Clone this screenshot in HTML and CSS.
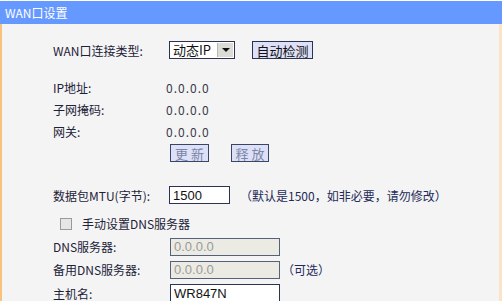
FILE: index.html
```html
<!DOCTYPE html>
<html lang="zh-CN">
<head>
  <meta charset="UTF-8" />
  <title>WAN口设置</title>
  <link rel="stylesheet" href="styles.css">
</head>
<body>
  <div class="title">WAN口设置</div>
  <div class="panel">
    <div class="row r-type">
      <span class="label">WAN口连接类型:</span>
      <div class="field">
        <div class="select"><span class="sel-text">动态IP</span><span class="sel-arrow"></span></div>
        <button class="btn btn-detect">自动检测</button>
      </div>
    </div>

    <div class="row r-info first">
      <span class="label">IP地址:</span>
      <span class="value">0.0.0.0</span>
    </div>
    <div class="row r-info">
      <span class="label">子网掩码:</span>
      <span class="value">0.0.0.0</span>
    </div>
    <div class="row r-info">
      <span class="label">网关:</span>
      <span class="value">0.0.0.0</span>
    </div>
    <div class="row r-info">
      <span class="label"></span>
      <div class="field">
        <button class="btn btn-off">更 新</button>
        <button class="btn btn-off">释 放</button>
      </div>
    </div>

    <div class="row r-mtu">
      <span class="label">数据包MTU(字节):</span>
      <div class="field">
        <input class="txt txt-mtu" value="1500">
        <span class="hint">（默认是1500，如非必要，请勿修改）</span>
      </div>
    </div>

    <div class="row r-check">
      <label class="check"><span class="box"></span>手动设置DNS服务器</label>
    </div>
    <div class="row r-dns">
      <span class="label">DNS服务器:</span>
      <input class="txt txt-dns" value="0.0.0.0" disabled>
    </div>
    <div class="row r-dns">
      <span class="label">备用DNS服务器:</span>
      <div class="field">
        <input class="txt txt-dns" value="0.0.0.0" disabled>
        <span class="hint hint-opt">（可选）</span>
      </div>
    </div>
    <div class="row r-host">
      <span class="label">主机名:</span>
      <input class="txt txt-dns" value="WR847N">
    </div>
  </div>
</body>
</html>
```

FILE: styles.css
```css
html, body {
  margin: 0;
  padding: 0;
  background: #ffffff;
  font-family: "Noto Sans CJK SC", sans-serif;
  font-size: 12px;
  color: #1c2238;
  overflow: hidden;
}

.title {
  margin-top: 1px;
  height: 23px;
  line-height: 23px;
  padding-left: 5px;
  background: #6699ff;
  color: #ffffff;
}

.panel {
  height: 277px;
  border-left: 2px solid #f6c27c;
  border-right: 3px solid #fbe3c8;
  background: #f4f4f4;
  padding: 15px 0 0 51px;
}

/* rows */
.row {
  display: flex;
  align-items: center;
  height: 22px;
}
.r-info.first { margin-top: 15px; }
.r-mtu { margin-top: 20px; }
.r-check { margin-top: 6px; height: 23px; }
.r-dns { height: 23px; }
.r-host { height: 24px; }

.label {
  width: 115px;
  flex: none;
}
.field {
  display: flex;
  align-items: center;
}
.value {
  color: #3a3a4a;
  letter-spacing: 1px;
  margin-left: -2px;
}

/* fake select */
.select {
  display: flex;
  width: 64px;
  height: 16px;
  border: 1px solid #2a3350;
  background: #ffffff;
  margin-left: 1px;
}
.sel-text {
  flex: 1;
  font-size: 13px;
  line-height: 16px;
  padding-left: 3px;
  color: #111;
}
.sel-arrow {
  width: 15px;
  margin: 1px;
  background: #dcdcd6;
  border-left: 1px solid #b8b8b0;
  position: relative;
}
.sel-arrow::after {
  content: '';
  position: absolute;
  left: 4px;
  top: 5px;
  border-left: 4px solid transparent;
  border-right: 4px solid transparent;
  border-top: 4px solid #111;
}

/* buttons */
.btn {
  font-family: "Noto Sans CJK SC", sans-serif;
  height: 18px;
  padding: 0;
  border: 1px solid #2a3350;
  background: #dde0f6;
  color: #111;
  line-height: 15px;
}
.btn-detect {
  width: 61px;
  margin-left: 17px;
  font-size: 13px;
}
.btn-off {
  width: 39px;
  font-size: 13px;
  color: #7a86a8;
  border-color: #3a4668;
  margin-left: 2px;
}
.btn-off + .btn-off { margin-left: 22px; width: 38px; }

/* text inputs */
.txt {
  box-sizing: border-box;
  height: 18px;
  margin: 0 0 0 1px;
  padding: 0 3px;
  border: 1px solid #2a3350;
  background: #ffffff;
  font-family: "Liberation Sans", Arial, sans-serif;
  font-size: 13px;
  color: #111;
}
.txt-mtu { width: 61px; }
.txt-dns { width: 110px; margin-left: 2px; }
.txt[disabled] {
  background: #ebebe3;
  color: #9a9a9a;
  border-color: #55607a;
}
.hint {
  margin-left: 10px;
  color: #1e2a58;
}
.hint-opt { margin-left: 2px; }

/* checkbox */
.check {
  display: flex;
  align-items: center;
  margin-left: 7px;
}
.box {
  width: 10px;
  height: 10px;
  border: 1px solid #9a9a9a;
  background: #e6e6e6;
  margin-right: 10px;
}
```
